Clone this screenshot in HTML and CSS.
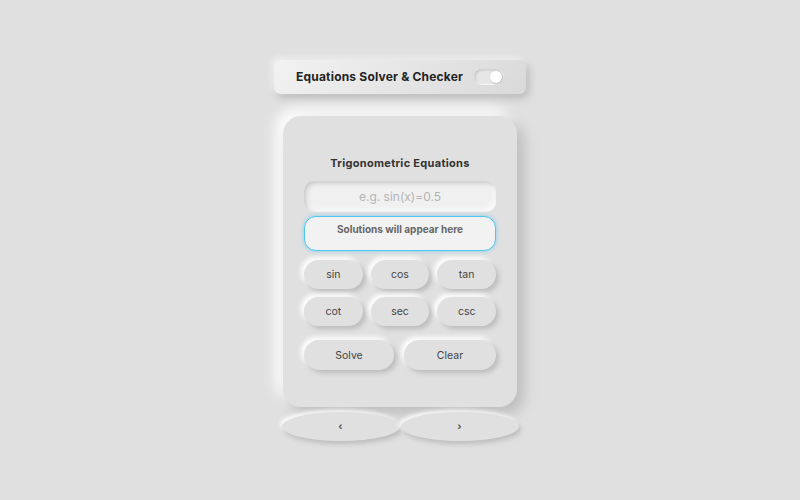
FILE: index.html
```html
<!DOCTYPE html>
<html lang="en">
  <head>
    <meta charset="UTF-8" />
    <meta name="viewport" content="width=device-width, initial-scale=1.0" />
    <title>Equations Solver &amp; Checker</title>
    <link rel="stylesheet" href="styles.css">
  </head>
  <body>
    <div class="app">
      <div class="topbar">
        <h1>Equations Solver &amp; Checker</h1>
        <label class="switch">
          <input type="checkbox" checked />
          <span class="knob"></span>
        </label>
      </div>

      <div class="solver-card">
        <h2>Trigonometric Equations</h2>
        <input type="text" class="eq-input" placeholder="e.g. sin(x)=0.5" />
        <div class="output">Solutions will appear here</div>

        <div class="func-grid">
          <button class="soft-btn">sin</button>
          <button class="soft-btn">cos</button>
          <button class="soft-btn">tan</button>
          <button class="soft-btn">cot</button>
          <button class="soft-btn">sec</button>
          <button class="soft-btn">csc</button>
        </div>

        <div class="actions">
          <button class="soft-btn">Solve</button>
          <button class="soft-btn">Clear</button>
        </div>
      </div>

      <div class="pager">
        <button class="page-btn">&lsaquo;</button>
        <button class="page-btn">&rsaquo;</button>
      </div>
    </div>
  </body>
</html>
```

FILE: styles.css
```css
body {
  font-family: Inter, "Open Sans", sans-serif;
  margin: 0;
  padding: 0;
  height: 100vh;
  display: flex;
  justify-content: center;
  align-items: center;
  background-color: #e0e0e0;
  color: #333;
}
.app {
  display: flex;
  flex-direction: column;
  align-items: center;
}
.topbar {
  width: 252px;
  height: 34px;
  box-sizing: border-box;
  padding: 0 22px 0 22px;
  display: flex;
  align-items: center;
  justify-content: space-between;
  border-radius: 7px;
  background: linear-gradient(135deg, #f2f2f2, #d9d9d9);
  box-shadow: 3px 4px 8px rgba(0, 0, 0, 0.18), -2px -2px 6px rgba(255, 255, 255, 0.7);
}
.topbar h1 {
  margin: 0;
  font-size: 12px;
  font-weight: 700;
  color: #222;
  letter-spacing: 0.2px;
}
.switch {
  position: relative;
  width: 30px;
  height: 16px;
  border-radius: 8px;
  background-color: #e6e6e6;
  box-shadow: inset 1px 1px 3px rgba(0, 0, 0, 0.15), inset -1px -1px 2px #fff;
}
.switch input {
  display: none;
}
.knob {
  position: absolute;
  top: 2px;
  right: 2px;
  width: 12px;
  height: 12px;
  border-radius: 50%;
  background-color: #fff;
  box-shadow: 1px 1px 2px rgba(0, 0, 0, 0.25);
}
.solver-card {
  margin-top: 22px;
  width: 234px;
  height: 291px;
  box-sizing: border-box;
  padding: 40px 21px 0 21px;
  border-radius: 18px;
  background-color: #e0e0e0;
  box-shadow: 7px 7px 14px #bdbdbd, -7px -7px 14px #ffffff;
}
.solver-card h2 {
  margin: 0 0 11px 0;
  text-align: center;
  font-size: 11px;
  font-weight: 700;
  color: #333;
  letter-spacing: 0.3px;
}
.eq-input {
  display: block;
  width: 100%;
  height: 31px;
  box-sizing: border-box;
  border: none;
  outline: none;
  border-radius: 10px;
  background-color: #f0f0f0;
  box-shadow: inset 2px 2px 5px #c6c6c6, inset -2px -2px 5px #ffffff;
  text-align: center;
  font-family: inherit;
  font-size: 12px;
  color: #333;
}
.eq-input::placeholder {
  color: #b4b4b4;
}
.output {
  margin-top: 4px;
  height: 35px;
  box-sizing: border-box;
  padding-top: 6px;
  text-align: center;
  font-size: 10px;
  font-weight: 700;
  color: #666;
  border: 1px solid #4fc6f2;
  border-radius: 12px;
  background-color: #f2f2f2;
  box-shadow: 0 0 4px rgba(60, 190, 240, 0.55);
}
.func-grid {
  margin-top: 9px;
  display: grid;
  grid-template-columns: repeat(3, 1fr);
  gap: 8px;
}
.soft-btn {
  height: 29px;
  padding-top: 2px;
  border: none;
  border-radius: 15px;
  background-color: #e0e0e0;
  box-shadow: 3px 3px 5px #bcbcbc, -3px -3px 5px #ffffff;
  font-family: inherit;
  font-size: 10.5px;
  color: #444;
  cursor: pointer;
}
.actions {
  margin-top: 14px;
  display: grid;
  grid-template-columns: 90px 92px;
  justify-content: space-between;
}
.actions .soft-btn {
  height: 30px;
}
.pager {
  margin-top: 5px;
  display: flex;
  gap: 1px;
}
.page-btn {
  width: 118px;
  height: 29px;
  border: none;
  border-radius: 50%;
  background-color: #e0e0e0;
  box-shadow: 2px 3px 5px #bcbcbc, -2px -2px 4px #ffffff;
  font-family: inherit;
  font-size: 10px;
  font-weight: 700;
  color: #555;
  cursor: pointer;
}
```
